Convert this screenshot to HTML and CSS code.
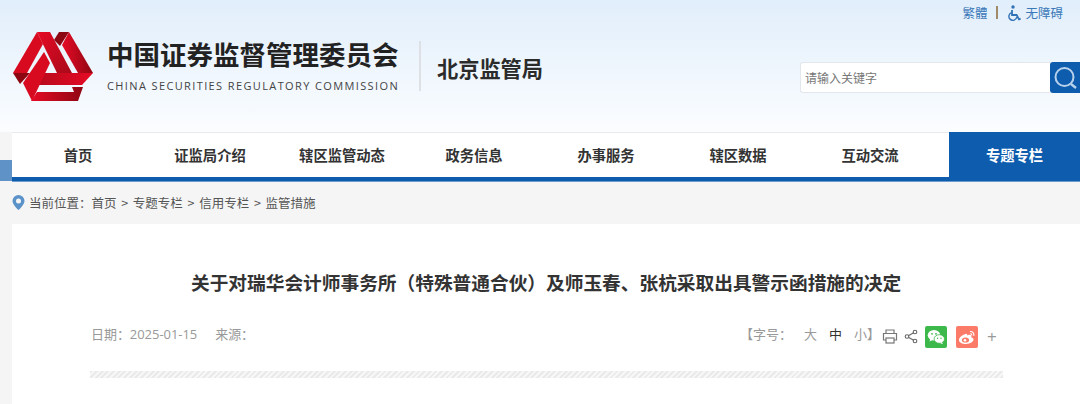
FILE: index.html
```html
<!DOCTYPE html>
<html lang="zh-CN">
<head>
  <meta charset="UTF-8" />
  <meta name="viewport" content="width=device-width, initial-scale=1" />
  <title>北京监管局</title>
  <link rel="stylesheet" href="styles.css">
</head>
<body>
  <header class="site-header">
    <div class="top-links">
      <a href="#">繁體</a>
      <span class="top-sep"></span>
      <svg class="icon-access" viewBox="0 0 14 16" width="14" height="16">
        <circle cx="5" cy="2" r="1.7" fill="#2f72b5"/>
        <path d="M4 5v5h4.6l2.4 4.4 1.6-.8" fill="none" stroke="#2f72b5" stroke-width="1.8"/>
        <path d="M3.4 7.6a4 4 0 1 0 5.4 4.6" fill="none" stroke="#2f72b5" stroke-width="1.4"/>
      </svg>
      <a href="#">无障碍</a>
    </div>
    <div class="brand-row">
      <svg class="logo" viewBox="0 0 82 71" width="82" height="71">
        <defs>
          <linearGradient id="redA" x1="0" y1="0" x2="1" y2="1">
            <stop offset="0" stop-color="#e60a25"/>
            <stop offset="1" stop-color="#a80a1a"/>
          </linearGradient>
          <linearGradient id="redB" x1="0" y1="0" x2="1" y2="0">
            <stop offset="0" stop-color="#b80a1c"/>
            <stop offset="1" stop-color="#e60a25"/>
          </linearGradient>
          <linearGradient id="redC" x1="0" y1="0" x2="1" y2="0">
            <stop offset="0" stop-color="#e60a25"/>
            <stop offset="1" stop-color="#8f0712"/>
          </linearGradient>
        </defs>
        <polygon points="25,0 31,12 15,41 1,41" fill="#d80a20"/>
        <polygon points="1,41 18,41 8,52" fill="#8c0711"/>
        <polygon points="25,0 38,0 60,41 45,41" fill="url(#redA)"/>
        <polygon points="47,0 57,0 48,14 42,8" fill="#8c0711"/>
        <polygon points="57,0 81,41 66,41 50,13" fill="url(#redC)"/>
        <polygon points="30,41 81,41 70,53 25,53" fill="url(#redB)"/>
        <polygon points="32,20 38,31 20,69 11,51" fill="#d80a20"/>
        <polygon points="19,69 66,69 71,55 60,55 62,60 25,60" fill="url(#redC)"/>
      </svg>
      <div class="brand-text">
        <div class="brand-cn">中国证券监督管理委员会</div>
        <div class="brand-en">CHINA SECURITIES REGULATORY COMMISSION</div>
      </div>
      <div class="brand-sub">北京监管局</div>
      <form class="search">
        <input class="search-input" type="text" placeholder="请输入关键字" />
        <button class="search-btn" type="button" aria-label="搜索">
          <svg viewBox="0 0 30 31" width="30" height="31">
            <circle cx="14.5" cy="15" r="9" fill="none" stroke="#b9d2ec" stroke-width="2"/>
            <path d="M21 22l5 4" stroke="#b9d2ec" stroke-width="2.4"/>
          </svg>
        </button>
      </form>
    </div>
  </header>

  <div class="nav-band">
    <nav class="nav">
      <a href="#">首页</a>
      <a href="#">证监局介绍</a>
      <a href="#">辖区监管动态</a>
      <a href="#">政务信息</a>
      <a href="#">办事服务</a>
      <a href="#">辖区数据</a>
      <a href="#">互动交流</a>
      <a href="#" class="active">专题专栏</a>
    </nav>
  </div>

  <div class="crumbs">
    <svg class="pin" viewBox="0 0 13 15" width="13" height="15">
      <path d="M6.5 0a6 6 0 0 0-6 6c0 4 6 9 6 9s6-5 6-9a6 6 0 0 0-6-6z" fill="#5b93c9"/>
      <circle cx="6.5" cy="6" r="2.5" fill="#f5f5f5"/>
    </svg>
    <span>当前位置：首页 &gt; 专题专栏 &gt; 信用专栏 &gt; 监管措施</span>
  </div>

  <main class="article">
    <h1>关于对瑞华会计师事务所（特殊普通合伙）及师玉春、张杭采取出具警示函措施的决定</h1>
    <div class="meta">
      <div class="meta-left">
        <span>日期：2025-01-15</span>
        <span>来源：</span>
      </div>
      <div class="meta-right">
        <span class="size-label">【字号：</span>
        <span class="size-opt">大</span>
        <span class="size-opt current">中</span>
        <span class="size-opt">小</span>
        <span class="size-end">】</span>
        <svg class="tool" viewBox="0 0 16 15" width="16" height="15">
          <path d="M4 4V1h8v3M4 11H1.5V4.5h13V11H12" fill="none" stroke="#777" stroke-width="1.2"/>
          <rect x="4" y="9" width="8" height="5" fill="none" stroke="#777" stroke-width="1.2"/>
        </svg>
        <svg class="tool" viewBox="0 0 14 15" width="14" height="15">
          <path d="M11 3L3 7.5l8 4.5" fill="none" stroke="#666" stroke-width="1.1"/>
          <circle cx="11" cy="3" r="1.8" fill="#fff" stroke="#666" stroke-width="1.1"/>
          <circle cx="3" cy="7.5" r="1.8" fill="#fff" stroke="#666" stroke-width="1.1"/>
          <circle cx="11" cy="12" r="1.8" fill="#fff" stroke="#666" stroke-width="1.1"/>
        </svg>
        <span class="share wechat">
          <svg viewBox="0 0 22 22" width="22" height="22">
            <ellipse cx="9" cy="9.2" rx="6.3" ry="5.2" fill="#fff"/>
            <path d="M5.5 12.5l-1 3 3-1.6z" fill="#fff"/>
            <ellipse cx="14.3" cy="13" rx="5.2" ry="4.3" fill="#fff" stroke="#3cb94a" stroke-width=".8"/>
            <path d="M16.8 16l1.2 2.2-3-1.2z" fill="#fff"/>
            <circle cx="7" cy="7.8" r=".9" fill="#3cb94a"/>
            <circle cx="11" cy="7.8" r=".9" fill="#3cb94a"/>
            <circle cx="12.6" cy="12.2" r=".7" fill="#3cb94a"/>
            <circle cx="16" cy="12.2" r=".7" fill="#3cb94a"/>
          </svg>
        </span>
        <span class="share weibo">
          <svg viewBox="0 0 22 22" width="22" height="22">
            <path d="M9.5 8C6 9 3 11.7 3 14c0 2.500 3.200 4 7 4 4.500 0 7.500-2.300 7.500-4.400 0-1.500-1.500-2-2.300-2.300.6-1.400.2-2.500-1.600-2.500-1 0-2 .5-2.500.7.3-1.300-.3-2.100-1.600-1.500z" fill="#fff"/>
            <ellipse cx="9.5" cy="14" rx="3.6" ry="2.6" fill="#fb7a68"/>
            <circle cx="9" cy="14.2" r="1.3" fill="#fff"/>
            <path d="M14 5.500c2.500-.4 4.500 1.700 3.800 4.300M14.300 7.800c1-.2 1.700.6 1.400 1.500" fill="none" stroke="#fff" stroke-width="1.1"/>
          </svg>
        </span>
        <span class="more">+</span>
      </div>
    </div>
    <div class="stripe"></div>
  </main>
</body>
</html>
```

FILE: styles.css
```css
html {
  background: #f5f5f5;
}
body {
  margin: 0;
  height: 404px;
  overflow: hidden;
  font-family: "Noto Sans CJK SC", "Noto Sans", sans-serif;
  color: #333;
}
a {
  text-decoration: none;
  color: inherit;
}
.site-header {
  height: 132px;
  background: linear-gradient(#e1eefb, #fbfdff);
  box-sizing: border-box;
  padding-top: 3px;
}
.top-links {
  display: flex;
  justify-content: flex-end;
  align-items: center;
  height: 19px;
  padding-right: 17px;
  font-size: 12.5px;
  color: #3a78b8;
}
.top-sep {
  width: 2px;
  height: 13px;
  background: #a08a6a;
  margin: 0 10px 0 9px;
}
.icon-access {
  margin-right: 3px;
}
.brand-row {
  display: flex;
  align-items: flex-start;
  padding: 10px 0 0 12px;
}
.logo {
  flex: none;
}
.brand-text {
  margin-left: 13px;
  width: 291px;
  padding-top: 5px;
}
.brand-cn {
  font-size: 26.5px;
  line-height: 34px;
  font-weight: 700;
  color: #222;
  white-space: nowrap;
}
.brand-en {
  margin-top: 8px;
  font-family: "Open Sans", "Noto Sans", sans-serif;
  font-size: 11px;
  line-height: 14px;
  letter-spacing: 1.38px;
  color: #444;
  white-space: nowrap;
}
.brand-sub {
  margin: 9px 0 0 21px;
  padding-left: 16px;
  border-left: 2px solid #dde1e6;
  height: 50px;
  line-height: 54px;
  font-size: 21.2px;
  font-weight: 700;
  color: #2b2b2b;
  white-space: nowrap;
}
.search {
  margin: 30px 0 0 auto;
  display: flex;
}
.search-input {
  width: 250px;
  height: 31px;
  box-sizing: border-box;
  border: 1px solid #e3e7ec;
  border-right: none;
  border-radius: 3px 0 0 3px;
  background: #fff;
  padding: 0 5px 0 4px;
  font-family: inherit;
  font-size: 12px;
  outline: none;
}
.search-input::placeholder {
  color: #777;
}
.search-btn {
  width: 30px;
  height: 31px;
  padding: 0;
  border: none;
  border-radius: 3px 0 0 3px;
  background: #0d5cad;
}
.search-btn svg {
  display: block;
}
.nav-band {
  padding-left: 12px;
  background: linear-gradient(transparent 28px, #5f92c6 28px);
}
.nav {
  display: flex;
  height: 44px;
  border-top: 1px solid #eaeaea;
  background: #fff;
  border-bottom: 4px solid #0d5cad;
  box-shadow: 0 1px 0 #6c9bcc;
}
.nav a {
  width: 132px;
  line-height: 43px;
  text-align: center;
  font-size: 14.3px;
  font-weight: 700;
  color: #333;
}
.nav a.active {
  width: 131px;
  margin-left: auto;
  margin-top: -1px;
  height: 45px;
  line-height: 45px;
  background: #0d5cad;
  color: #fff;
}
.crumbs {
  display: flex;
  align-items: center;
  gap: 4px;
  height: 43px;
  padding-left: 12px;
  font-size: 12.5px;
  word-spacing: 1.9px;
  color: #555;
}
.pin {
  flex: none;
}
.article {
  margin-left: 12px;
  height: 181px;
  background: #fff;
  overflow: hidden;
}
.article h1 {
  margin: 44px 0 0;
  padding-left: 179px;
  font-size: 18.7px;
  line-height: 28px;
  font-weight: 700;
  color: #333;
  white-space: nowrap;
}
.meta {
  display: flex;
  justify-content: space-between;
  align-items: center;
  margin: 25px 80px 0 79px;
  height: 24px;
  font-family: "Open Sans", "Noto Sans CJK SC", sans-serif;
  font-size: 13px;
  color: #999;
}
.meta-left {
  display: flex;
  gap: 18px;
  letter-spacing: -.05px;
}
.meta-right {
  display: flex;
  align-items: center;
}
.size-opt {
  margin-left: 12px;
}
.size-opt.current {
  color: #333;
}
.size-end {
  width: 6px;
}
.tool {
  margin: 6px 0 0 9px;
}
.tool + .tool {
  margin-left: 6px;
}
.share {
  width: 22px;
  height: 22px;
  border-radius: 2px;
  margin: 8px 0 0 7px;
}
.share svg {
  display: block;
}
.wechat {
  background: #3cb94a;
}
.weibo {
  background: #fb7a68;
  margin-left: 9px;
}
.more {
  margin: 6px 0 0 9px;
  width: 13px;
  font-size: 17px;
  color: #999;
}
.stripe {
  margin: 26px 77px 0 78px;
  height: 7px;
  background: repeating-linear-gradient(135deg, #eaeaea 0 2px, #f7f7f7 2px 4px);
}
```
